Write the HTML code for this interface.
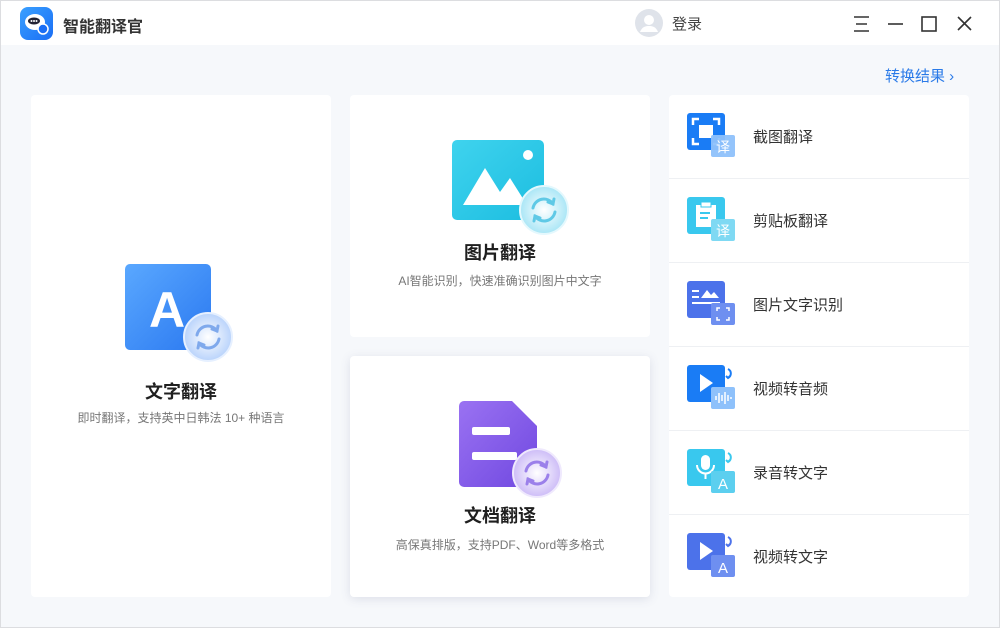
<!DOCTYPE html>
<html><head><meta charset="utf-8"><style>
*{margin:0;padding:0;box-sizing:border-box}
body{width:1000px;height:628px;overflow:hidden;background:#f6f8fb;font-family:"Liberation Sans","Noto Sans CJK SC",sans-serif;position:relative}
.frame{position:absolute;left:0;top:0;width:1000px;height:628px;border:1px solid #dcdde0;pointer-events:none;z-index:10}
.top{position:absolute;left:0;top:0;width:1000px;height:45px;background:#fff}
.card{position:absolute;background:#fff;border-radius:4px}
.t{position:absolute;left:0;width:100%;text-align:center;font-weight:bold;font-size:18px;color:#1f1f1f}
.s{position:absolute;left:0;width:100%;text-align:center;font-size:12px;color:#777}
.row{position:absolute;left:0;width:300px;height:84px;border-bottom:1px solid #eef0f3}
.row span{position:absolute;left:84px;top:31px;font-size:15px;color:#333}
.row svg{position:absolute;left:18px;top:18px}
svg{position:absolute}
</style></head><body>
<div class="frame"></div>
<div class="top">
<svg style="left:20px;top:7px" width="33" height="33" viewBox="0 0 33 33"><defs><linearGradient id="lg" x1="0" y1="0" x2="1" y2="1"><stop offset="0" stop-color="#3aa0ff"/><stop offset="1" stop-color="#1a6ef5"/></linearGradient></defs><rect width="33" height="33" rx="8" fill="url(#lg)"/><ellipse cx="15" cy="15" rx="10" ry="8" fill="#fff"/><ellipse cx="14" cy="14" rx="6" ry="3.5" fill="#223"/><circle cx="11.5" cy="14" r="1" fill="#fff"/><circle cx="14" cy="14" r="1" fill="#fff"/><circle cx="16.5" cy="14" r="1" fill="#fff"/><circle cx="23" cy="22" r="5" fill="#1a6ef5" stroke="#fff" stroke-width="1.5"/></svg>
<div style="position:absolute;left:63px;top:13px;font-size:16px;font-weight:bold;color:#333">智能翻译官</div>
<svg style="left:635px;top:9px" width="28" height="28" viewBox="0 0 28 28"><circle cx="14" cy="14" r="14" fill="#dfe3ea"/><circle cx="14" cy="11" r="5" fill="#fff"/><path d="M5 23c2-5 5-6 9-6s7 1 9 6z" fill="#fff"/></svg>
<div style="position:absolute;left:672px;top:13px;font-size:15px;color:#444">登录</div>
<svg style="left:852px;top:14px" width="124" height="20" viewBox="0 0 124 20" fill="none" stroke="#333" stroke-width="1.6"><path d="M2 3h15M4 10h11M2 17h15"/><path d="M36 10h15"/><rect x="70" y="3" width="14" height="14"/><path d="M106 3l13 13M119 3l-13 13"/></svg>
</div>
<div style="position:absolute;left:885px;top:65px;font-size:15px;color:#2a7ae8">转换结果 ›</div>

<div class="card" style="left:31px;top:95px;width:300px;height:502px">
<div class="t" style="top:283px">文字翻译</div>
<div class="s" style="top:314px">即时翻译，支持英中日韩法 10+ 种语言</div>
</div>
<div class="card" style="left:350px;top:95px;width:300px;height:242px">
<div class="t" style="top:144px">图片翻译</div>
<div class="s" style="top:177px">AI智能识别，快速准确识别图片中文字</div>
</div>
<div class="card" style="left:350px;top:356px;width:300px;height:241px;box-shadow:0 2px 10px rgba(80,90,130,.15)">
<div class="t" style="top:146px">文档翻译</div>
<div class="s" style="top:180px">高保真排版，支持PDF、Word等多格式</div>
</div>

<svg width="1000" height="628" style="left:0;top:0" viewBox="0 0 1000 628">
<defs>
<linearGradient id="a" x1="0" y1="0" x2="1" y2="1"><stop offset="0" stop-color="#5aa8ff"/><stop offset="1" stop-color="#2a78f0"/></linearGradient>
<linearGradient id="b" x1="0" y1="0" x2="1" y2="1"><stop offset="0" stop-color="#3fd3ee"/><stop offset="1" stop-color="#1cbde0"/></linearGradient>
<linearGradient id="c" x1="0" y1="0" x2="1" y2="1"><stop offset="0" stop-color="#9a72f2"/><stop offset="1" stop-color="#7048e0"/></linearGradient>
<radialGradient id="g1"><stop offset="0" stop-color="#fff"/><stop offset="1" stop-color="#b9d3fb"/></radialGradient>
<radialGradient id="g2"><stop offset="0" stop-color="#fff"/><stop offset="1" stop-color="#a9e6f6"/></radialGradient>
<radialGradient id="g3"><stop offset="0" stop-color="#fff"/><stop offset="1" stop-color="#cdbcf7"/></radialGradient>
</defs>
<rect x="125" y="264" width="86" height="86" rx="5" fill="url(#a)"/>
<text x="167" y="327" font-family="Liberation Sans" font-weight="bold" font-size="50" fill="#fff" text-anchor="middle">A</text>
<circle cx="208" cy="337" r="24" fill="url(#g1)" stroke="#e6f0ff" stroke-width="2"/>
<g transform="translate(208 337)" fill="none" stroke="#7fa9ec" stroke-width="3" stroke-linecap="round"><path d="M-11 -2a11 11 0 0 1 20 -4"/><path d="M4 -8l5 2l1 -5"/><path d="M11 2a11 11 0 0 1 -20 4"/><path d="M-4 8l-5 -2l-1 5"/></g>

<rect x="452" y="140" width="92" height="80" rx="5" fill="url(#b)"/>
<circle cx="528" cy="155" r="5" fill="#fff"/>
<path d="M463 205l22-37l15 24l10-14l17 27z" fill="#fff"/>
<circle cx="544" cy="210" r="24" fill="url(#g2)" stroke="#e4f8fd" stroke-width="2"/>
<g transform="translate(544 210)" fill="none" stroke="#5fc9e6" stroke-width="3" stroke-linecap="round"><path d="M-11 -2a11 11 0 0 1 20 -4"/><path d="M4 -8l5 2l1 -5"/><path d="M11 2a11 11 0 0 1 -20 4"/><path d="M-4 8l-5 -2l-1 5"/></g>

<path d="M464 401h48l25 25v56a5 5 0 0 1 -5 5h-68a5 5 0 0 1 -5 -5v-76a5 5 0 0 1 5 -5z" fill="url(#c)"/>
<rect x="472" y="427" width="38" height="8" rx="2" fill="#fff"/><rect x="472" y="452" width="45" height="8" rx="2" fill="#fff"/>
<circle cx="537" cy="473" r="24" fill="url(#g3)" stroke="#efe9fd" stroke-width="2"/>
<g transform="translate(537 473)" fill="none" stroke="#9b80ea" stroke-width="3" stroke-linecap="round"><path d="M-11 -2a11 11 0 0 1 20 -4"/><path d="M4 -8l5 2l1 -5"/><path d="M11 2a11 11 0 0 1 -20 4"/><path d="M-4 8l-5 -2l-1 5"/></g>
</svg>

<div class="card" style="left:669px;top:95px;width:300px;height:502px;overflow:hidden">
<div class="row" style="top:0"><svg width="50" height="46" viewBox="0 0 50 46"><rect width="38" height="37" rx="3" fill="#1a7cf5"/><path d="M6 12V6h6M26 6h6v6M32 25v6h-6M12 31H6v-6" stroke="#fff" stroke-width="2.5" fill="none"/><rect x="12" y="12" width="14" height="13" fill="#fff"/><rect x="24" y="22" width="24" height="22" rx="2" fill="#8ec1fb" opacity=".95"/><text x="36" y="39" font-size="14" fill="#fff" text-anchor="middle" font-family="Noto Sans CJK SC">译</text></svg><span>截图翻译</span></div>
<div class="row" style="top:84px"><svg width="50" height="46" viewBox="0 0 50 46"><rect width="38" height="37" rx="3" fill="#39c8ee"/><path d="M9 8h20v22H9z" fill="#fff"/><rect x="14" y="5" width="10" height="5" fill="#fff" stroke="#39c8ee"/><path d="M13 16h10M13 21h8" stroke="#39c8ee" stroke-width="2"/><rect x="24" y="22" width="24" height="22" rx="2" fill="#7fd9f3"/><text x="36" y="39" font-size="14" fill="#fff" text-anchor="middle" font-family="Noto Sans CJK SC">译</text></svg><span>剪贴板翻译</span></div>
<div class="row" style="top:168px"><svg width="50" height="46" viewBox="0 0 50 46"><rect width="38" height="37" rx="3" fill="#4c72ea"/><path d="M5 10h7M5 16h7M5 22h28" stroke="#fff" stroke-width="2"/><path d="M14 17l6-8 4 5 3-3 5 6z" fill="#fff"/><rect x="24" y="22" width="24" height="22" rx="2" fill="#6e8ff0"/><path d="M30 30v-3h3M39 27h3v3M42 36v3h-3M33 39h-3v-3" stroke="#fff" stroke-width="1.5" fill="none"/></svg><span>图片文字识别</span></div>
<div class="row" style="top:252px"><svg width="50" height="46" viewBox="0 0 50 46"><rect width="38" height="37" rx="3" fill="#1a7cf5"/><path d="M13 9l13 9-13 9z" fill="#fff"/><path d="M41 4a5 5 0 0 1 0 9M39 11l2 2 2-2" stroke="#1a7cf5" stroke-width="2" fill="none"/><rect x="24" y="22" width="24" height="22" rx="2" fill="#8ec1fb"/><path d="M29 31v4M32 28v10M35 30v6M38 27v12M41 30v6M44 32v2" stroke="#fff" stroke-width="1.5"/></svg><span>视频转音频</span></div>
<div class="row" style="top:336px"><svg width="50" height="46" viewBox="0 0 50 46"><rect width="38" height="37" rx="3" fill="#39c8ee"/><rect x="14" y="6" width="9" height="15" rx="4.5" fill="#fff"/><path d="M10 16a8.5 8.5 0 0 0 17 0M18.5 25v5" stroke="#fff" stroke-width="2" fill="none"/><path d="M41 4a5 5 0 0 1 0 9M39 11l2 2 2-2" stroke="#39c8ee" stroke-width="2" fill="none"/><rect x="24" y="22" width="24" height="22" rx="2" fill="#5ccfef"/><text x="36" y="40" font-size="15" fill="#fff" text-anchor="middle" font-family="Liberation Sans">A</text></svg><span>录音转文字</span></div>
<div class="row" style="top:420px;border:0"><svg width="50" height="46" viewBox="0 0 50 46"><rect width="38" height="37" rx="3" fill="#4c72ea"/><path d="M13 9l13 9-13 9z" fill="#fff"/><path d="M41 4a5 5 0 0 1 0 9M39 11l2 2 2-2" stroke="#4c72ea" stroke-width="2" fill="none"/><rect x="24" y="22" width="24" height="22" rx="2" fill="#6e8ff0"/><text x="36" y="40" font-size="15" fill="#fff" text-anchor="middle" font-family="Liberation Sans">A</text></svg><span>视频转文字</span></div>
</div>
</body></html>
